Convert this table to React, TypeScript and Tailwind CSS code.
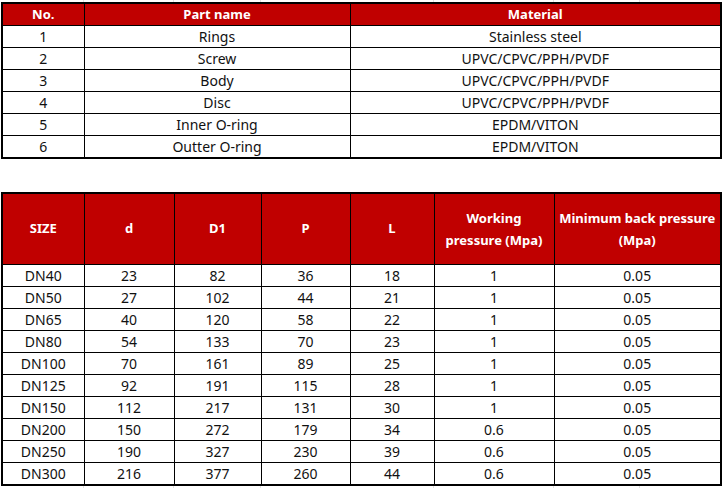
import React from "react";

const parts = [
  ["1", "Rings", "Stainless steel"],
  ["2", "Screw", "UPVC/CPVC/PPH/PVDF"],
  ["3", "Body", "UPVC/CPVC/PPH/PVDF"],
  ["4", "Disc", "UPVC/CPVC/PPH/PVDF"],
  ["5", "Inner O-ring", "EPDM/VITON"],
  ["6", "Outter O-ring", "EPDM/VITON"],
];

const sizes = [
  ["DN40", "23", "82", "36", "18", "1", "0.05"],
  ["DN50", "27", "102", "44", "21", "1", "0.05"],
  ["DN65", "40", "120", "58", "22", "1", "0.05"],
  ["DN80", "54", "133", "70", "23", "1", "0.05"],
  ["DN100", "70", "161", "89", "25", "1", "0.05"],
  ["DN125", "92", "191", "115", "28", "1", "0.05"],
  ["DN150", "112", "217", "131", "30", "1", "0.05"],
  ["DN200", "150", "272", "179", "34", "0.6", "0.05"],
  ["DN250", "190", "327", "230", "39", "0.6", "0.05"],
  ["DN300", "216", "377", "260", "44", "0.6", "0.05"],
];

// faint sheet gridlines peeking out above / below the tables
function GridStrip() {
  return (
    <div className="flex h-[2px]">
      <div className="w-[84px] border-r border-[#e1e1e1]" />
      <div className="w-[90px] border-r border-[#e1e1e1]" />
      <div className="w-[87px] border-r border-[#e1e1e1]" />
      <div className="w-[173px] border-r border-[#e1e1e1]" />
      <div className="w-[120px] border-r border-[#e1e1e1]" />
      <div className="w-[86px] border-r border-[#e1e1e1]" />
    </div>
  );
}

export default function App() {
  const th = "bg-[#c00000] text-white font-bold text-[13px] border border-black text-center p-0";
  const td = "border border-black text-center p-0 h-[22px]";

  return (
    <div
      className="w-[725px] h-[488px] bg-white text-[14px] leading-[21px] text-[#111] overflow-hidden"
      style={{ fontFamily: '"Noto Sans", "Open Sans", sans-serif' }}
    >
      <GridStrip />
      <div className="pl-[1px]">
        <table className="table-fixed border-collapse border-2 border-black w-[721px]">
          <colgroup>
            <col className="w-[82px]" />
            <col className="w-[266px]" />
            <col />
          </colgroup>
          <thead>
            <tr className="h-[22px]">
              <th className={th}>No.</th>
              <th className={th}>Part name</th>
              <th className={th}>Material</th>
            </tr>
          </thead>
          <tbody>
            {parts.map((r) => (
              <tr key={r[0]}>
                {r.map((c, i) => (
                  <td key={i} className={td}>{c}</td>
                ))}
              </tr>
            ))}
          </tbody>
        </table>

        <table className="table-fixed border-collapse border-2 border-black w-[721px] mt-[33px]">
          <colgroup>
            <col className="w-[82px]" />
            <col className="w-[90px]" />
            <col className="w-[87px]" />
            <col className="w-[89px]" />
            <col className="w-[84px]" />
            <col className="w-[120px]" />
            <col />
          </colgroup>
          <thead>
            <tr className="h-[71px]">
              <th className={th}>SIZE</th>
              <th className={th}>d</th>
              <th className={th}>D1</th>
              <th className={th}>P</th>
              <th className={th}>L</th>
              <th className={th + " leading-[22px]"}>
                Working
                <br />
                pressure (Mpa)
              </th>
              <th className={th + " leading-[22px]"}>
                Minimum back pressure
                <br />
                (Mpa)
              </th>
            </tr>
          </thead>
          <tbody>
            {sizes.map((r) => (
              <tr key={r[0]}>
                {r.map((c, i) => (
                  <td key={i} className={td}>{c}</td>
                ))}
              </tr>
            ))}
          </tbody>
        </table>
      </div>
      <GridStrip />
    </div>
  );
}
